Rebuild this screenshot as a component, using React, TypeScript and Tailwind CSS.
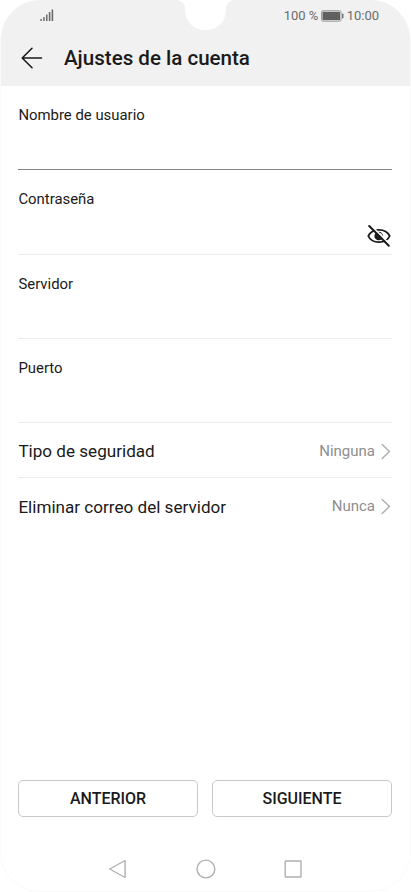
const fields = [
  { label: "Nombre de usuario", active: true },
  { label: "Contraseña", secret: true },
  { label: "Servidor" },
  { label: "Puerto" },
];

const options = [
  { label: "Tipo de seguridad", value: "Ninguna" },
  { label: "Eliminar correo del servidor", value: "Nunca" },
];

const StatusBar = () => {
  return (
    <div className="relative flex h-8 justify-between pl-[39px] pr-[31px] text-[#6b6b6b]">
      <svg width="14" height="14" viewBox="0 0 14 14" className="mt-2" fill="currentColor">
        <rect x="0.3" y="11" width="1.5" height="2" />
        <rect x="3.2" y="9" width="1.5" height="4" />
        <rect x="6" y="6.5" width="1.5" height="6.5" />
        <rect x="8.8" y="4" width="1.6" height="9" />
        <rect x="11.6" y="1.5" width="1.6" height="11.5" />
      </svg>
      <svg width="60" height="31" viewBox="0 0 60 31" className="absolute left-[174px] top-0">
        <path d="M2 0C8 1 10.2 4 10.2 11C10.7 22 19 30.2 30.5 30.2S50.5 22 50.8 11C50.8 4 53 1 59 0Z" fill="#fff" />
      </svg>
      <div className="flex h-8 items-center text-[13px]">
        <span className="w-[37px] whitespace-nowrap">100 %</span>
        <svg width="23" height="12" viewBox="0 0 23 12" className="mr-[3px]">
          <rect x="0.5" y="0.7" width="19.5" height="10.5" rx="1.5" fill="none" stroke="#9a9a9a" />
          <rect x="1.5" y="1.8" width="17.5" height="8.300" fill="#606060" />
          <rect x="21" y="3.5" width="1.5" height="5" rx="0.7" fill="#777" />
        </svg>
        <span>10:00</span>
      </div>
    </div>
  );
};

const EyeOff = () => {
  return (
    <svg width="24" height="22" viewBox="0 0 24 22" fill="none" stroke="#1c1c1c" strokeWidth="1.8" strokeLinecap="round">
      <path d="M1.3 11C3 7.3 7 4.8 12 4.8S21 7.3 22.7 11C21 14.9 17 17.2 12 17.2S3 14.9 1.3 11Z" />
      <circle cx="11.7" cy="11" r="4.3" fill="#1c1c1c" stroke="none" />
      <path d="M12.5 8.3C14 8.5 14.8 9.4 14.9 10.8" stroke="#fff" strokeWidth="1.1" />
      <path d="M3.7 0.2L23.2 19.6" stroke="#fff" strokeWidth="1.5" />
      <path d="M2.2 1L21.8 20.7" strokeWidth="2" />
    </svg>
  );
};

const Chevron = () => {
  return (
    <svg width="10" height="17" viewBox="0 0 10 17" fill="none" stroke="#b0b0b0" strokeWidth="1.5" strokeLinecap="round" strokeLinejoin="round">
      <path d="M1.2 1.5L8.5 8.5L1.2 15.5" />
    </svg>
  );
};

export default function App() {
  return (
    <div className="h-[892px] w-[411px] bg-white font-['Roboto',sans-serif] text-[#1a1a1a]">
      <div className="flex h-full flex-col overflow-hidden rounded-[40px] border border-t-0 border-[#fafafa] bg-white">
        <header className="h-[86px] shrink-0 bg-[#f1f1f1]">
          <StatusBar />
          <div className="flex h-[52px] items-center pl-5">
            <svg width="22" height="22" viewBox="0 0 22 22" fill="none" stroke="#1a1a1a" strokeWidth="1.6" strokeLinecap="round" strokeLinejoin="round">
              <path d="M11 1.3L1.2 11L11 20.7M1.2 11H20.5" />
            </svg>
            <h1 className="ml-[21px] text-[20.55px] font-medium">Ajustes de la cuenta</h1>
          </div>
        </header>

        <main className="flex-1 pl-[17px] pr-[18px]">
          {fields.map((field) => (
            <div
              key={field.label}
              className={`flex justify-between border-b ${field.secret ? "h-[85px]" : "h-[84px]"} ${field.active ? "border-[#858585]" : "border-[#ececec]"}`}
            >
              <label className="pl-[0.4px] pt-[18px] text-[14.9px] leading-[22px]">{field.label}</label>
              {field.secret && (
                <button className="mr-px self-end pb-[7px]">
                  <EyeOff />
                </button>
              )}
            </div>
          ))}
          {options.map((option, index) => (
            <div
              key={option.label}
              className={`flex h-[55px] items-center justify-between pt-0.5 ${index === 0 ? "border-b border-[#ececec]" : ""}`}
            >
              <span className="pl-[0.4px] pt-0.5 text-[17.1px]">{option.label}</span>
              <span className="flex items-center gap-1.5 pr-px text-[15px] text-[#8e8e8e]">
                {option.value}
                <Chevron />
              </span>
            </div>
          ))}
        </main>

        <div className="flex shrink-0 gap-[14px] pl-[17px] pr-[18px]">
          <button className="h-[37px] flex-1 rounded-[5px] border border-[#c9c9c9] text-base font-medium">ANTERIOR</button>
          <button className="h-[37px] flex-1 rounded-[5px] border border-[#c9c9c9] text-base font-medium">SIGUIENTE</button>
        </div>

        <nav className="flex h-[74px] shrink-0 items-center justify-center gap-[68px] pt-[30px]">
          <svg width="20" height="20" viewBox="0 0 20 20" fill="none" stroke="#b0b0b0" strokeWidth="1.4" strokeLinejoin="round">
            <path d="M17.1 1.5V18.5L1.7 10Z" />
          </svg>
          <svg width="20" height="20" viewBox="0 0 20 20" fill="none" stroke="#b0b0b0" strokeWidth="1.4">
            <circle cx="9.900" cy="10" r="8.9" />
          </svg>
          <svg width="20" height="20" viewBox="0 0 20 20" fill="none" stroke="#b0b0b0" strokeWidth="1.4">
            <rect x="1.2" y="2" width="15.800" height="16" rx="0.5" />
          </svg>
        </nav>
      </div>
    </div>
  );
}
